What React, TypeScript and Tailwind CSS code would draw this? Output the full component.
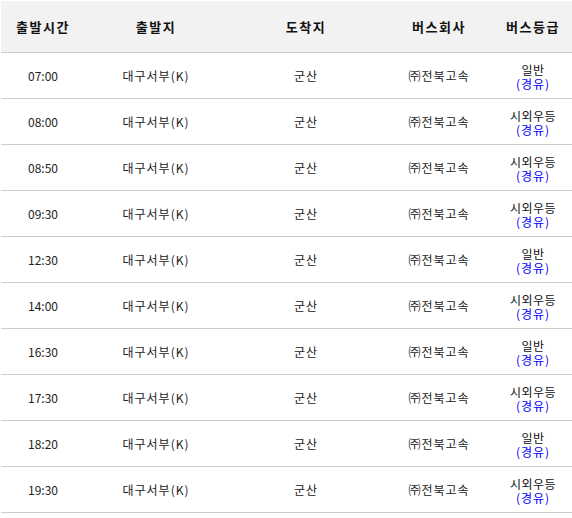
import React from "react";

const rows = [
  { t: "07:00", g: "일반" },
  { t: "08:00", g: "시외우등" },
  { t: "08:50", g: "시외우등" },
  { t: "09:30", g: "시외우등" },
  { t: "12:30", g: "일반" },
  { t: "14:00", g: "시외우등" },
  { t: "16:30", g: "일반" },
  { t: "17:30", g: "시외우등" },
  { t: "18:20", g: "일반" },
  { t: "19:30", g: "시외우등" },
];

const cols = "grid grid-cols-[84px_142px_158px_108px_80px]";

export default function App() {
  return (
    <div
      className="w-[572px] h-[518px] bg-white pt-px pl-px"
      style={{ fontFamily: '"Noto Sans CJK KR", "Noto Sans", sans-serif' }}
    >
      <div className={`${cols} h-[52px] bg-[#f2f2f2] border-b border-[#cccccc] items-center text-[13px] font-bold text-[#111111] tracking-[1.5px]`}>
        <div className="text-center">출발시간</div>
        <div className="text-center">출발지</div>
        <div className="text-center">도착지</div>
        <div className="text-center">버스회사</div>
        <div className="text-center">버스등급</div>
      </div>
      {rows.map((r) => (
        <div
          key={r.t}
          className={`${cols} h-[46px] border-b border-[#cccccc] items-center text-[12px] text-[#222222]`}
        >
          <div className="text-center">{r.t}</div>
          <div className="text-center tracking-[1px]">대구서부(K)</div>
          <div className="text-center tracking-[1px]">군산</div>
          <div className="text-center tracking-[1px]">㈜전북고속</div>
          <div className="flex flex-col items-center leading-[14px] pt-[2px]">
            <span className="tracking-[0.5px] text-[#111111]">{r.g}</span>
            <span className="text-[#0000ff] tracking-[1px]">(경유)</span>
          </div>
        </div>
      ))}
    </div>
  );
}
